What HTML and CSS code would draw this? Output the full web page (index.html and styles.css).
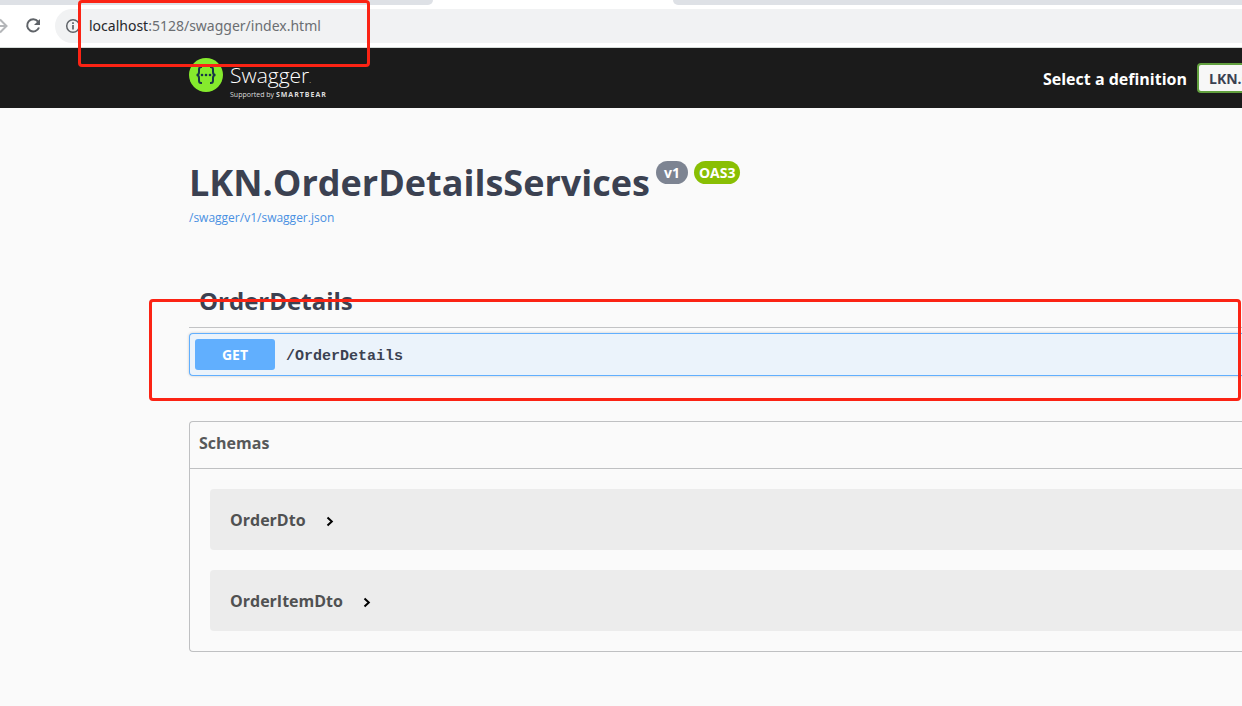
FILE: index.html
```
<!DOCTYPE html>
<html lang="en">
<head>
<meta charset="utf-8">
<title>Swagger UI</title>
<link rel="stylesheet" href="styles.css">
</head>
<body>
<div class="page">
  <div class="browser">
    <div class="tabs"><span class="tab tab-left"></span><span class="tab tab-active"></span><span class="tab tab-right"></span></div>
    <div class="toolbar">
      <button class="icon-btn forward" aria-label="Forward"><svg width="10" height="16" viewBox="0 0 10 16" fill="none" stroke="#b4b6b9" stroke-width="2"><path d="M-5 8H6M0 1.500L6.500 8L0 14.500"/></svg></button>
      <button class="icon-btn reload" aria-label="Reload"><svg width="16" height="16" viewBox="0 0 16 16"><path d="M13 3.500A6.100 6.100 0 1 0 14 9.500" fill="none" stroke="#5f6368" stroke-width="2"/><path d="M15 1V7H9Z" fill="#5f6368"/></svg></button>
      <div class="omnibox">
        <svg width="16" height="16" viewBox="0 0 16 16" fill="none" stroke="#5f6368" stroke-width="1.500"><circle cx="8" cy="8" r="6.300"/><path d="M8 7V11.500M8 4.300V6" stroke-width="1.700"/></svg>
        <a class="url" href="#"><span class="host">localhost</span>:5128/swagger/index.html</a>
      </div>
    </div>
  </div>

  <header class="topbar">
    <a class="brand" href="#" aria-label="Swagger">
      <svg width="34" height="34" viewBox="0 0 34 34"><circle cx="17" cy="17" r="17" fill="#85ea2d"/><g fill="none" stroke="#173647" stroke-width="2"><path d="M13 9H12Q10 9 10 11.500V14Q10 17 7.500 17Q10 17 10 20V22.500Q10 25 12 25H13M21 9H22Q24 9 24 11.500V14Q24 17 26.500 17Q24 17 24 20V22.500Q24 25 22 25H21"/></g><g fill="#173647"><circle cx="13" cy="17" r="1.300"/><circle cx="17" cy="17" r="1.300"/><circle cx="21" cy="17" r="1.300"/></g></svg>
      <span class="wordmark"><span class="name">Swagger<small>.</small></span><span class="support">Supported by <b>SMARTBEAR</b></span></span>
    </a>
    <div class="definition">
      <label for="def">Select a definition</label>
      <select id="def"><option>LKN.OrderDetailsServices v1</option></select>
    </div>
  </header>

  <main class="content">
    <div class="title-row">
      <h1>LKN.OrderDetailsServices</h1>
      <span class="badge">v1</span><span class="badge oas">OAS3</span>
    </div>
    <a class="spec" href="#">/swagger/v1/swagger.json</a>

    <h2>OrderDetails</h2>
    <button class="operation"><span class="method">GET</span><span class="path">/OrderDetails</span></button>

    <section class="schemas">
      <h3>Schemas</h3>
      <div class="models">
        <button class="model">OrderDto<svg width="8" height="14" viewBox="0 0 8 14" fill="none" stroke="#000" stroke-width="2"><path d="M1.500 4.500L5.800 8.500L1.500 12.500"/></svg></button>
        <button class="model">OrderItemDto<svg width="8" height="14" viewBox="0 0 8 14" fill="none" stroke="#000" stroke-width="2"><path d="M1.500 4.500L5.800 8.500L1.500 12.500"/></svg></button>
      </div>
    </section>
  </main>
  <div class="mark mark-url"></div>
  <div class="mark mark-operation"></div>
</div>
</body>
</html>
```
FILE: styles.css
```
* { box-sizing: border-box; }
body { margin: 0; background: #fafafa; color: #3b4151; font-family: "Open Sans", "Noto Sans", sans-serif; }
button { border: 0; margin: 0; padding: 0; background: none; font: inherit; color: inherit; text-align: left; }
a { text-decoration: none; }
svg { display: block; flex: none; }
h1, h2, h3 { margin: 0; }
.page { position: relative; min-height: 100vh; overflow: hidden; }

.browser { background: #fff; border-bottom: 1px solid #d5dbd8; }
.tabs { display: flex; height: 5px; }
.tab-left { width: 433px; background: #dee1e6; border-bottom-right-radius: 6px; }
.tab-active { width: 240px; }
.tab-right { flex: 1; background: #dee1e6; border-bottom-left-radius: 6px; }
.toolbar { display: flex; align-items: center; height: 42px; }
.forward { width: 25px; }
.reload { width: 30px; }
.omnibox { flex: 1; display: flex; align-items: center; gap: 8px; height: 34px; padding-left: 10px; border-radius: 17px 0 0 17px; background: #f1f2f3; }
.url { padding-bottom: 2px; font-family: "Noto Sans", sans-serif; font-size: 14px; color: #6b6e72; }
.host { color: #25272a; }

.topbar { display: flex; justify-content: space-between; align-items: center; height: 60px; padding-left: 189px; background: #1b1b1b; color: #fff; }
.brand { display: flex; gap: 7px; height: 40px; color: #fff; }
.wordmark { display: flex; flex-direction: column; padding-top: 6px; }
.name { font-size: 21px; line-height: 22px; font-weight: 300; }
.name small { font-size: 8px; }
.support { font-size: 7px; line-height: 8px; white-space: nowrap; color: #ddd; }
.support b { font-size: 7px; letter-spacing: 1px; }
.definition { display: flex; align-items: center; gap: 10px; }
.definition label { padding-top: 2px; font-size: 16px; font-weight: 700; }
.definition select { appearance: none; width: 240px; height: 30px; margin-right: -195px; padding: 0 10px; border: 2px solid #62a03f; border-radius: 4px; background: #f7f7f7; color: #3b4151; font: 700 14px "Open Sans", sans-serif; }

.content { padding: 50px 0 54px 189px; }
.title-row { display: flex; align-items: flex-start; gap: 6px; }
h1 { font-size: 36px; line-height: 50px; font-weight: 700; }
.badge { margin-top: 3px; padding: 0 8px; border-radius: 12px; background: #7d8492; color: #fff; font-size: 14px; line-height: 23px; font-weight: 700; }
.oas { padding: 0 5px; background: #89bf04; }
.spec { display: block; font-size: 12px; line-height: 20px; color: #4990e2; }
h2 { margin-top: 51px; padding: 6px 10px 10px; border-bottom: 1px solid #c2c3c5; font-size: 24px; line-height: 32px; }
.operation { display: flex; align-items: center; gap: 11px; width: 100%; height: 43px; margin-top: 5px; padding: 5px; border: 1px solid #61affe; border-right: 0; border-radius: 4px 0 0 4px; background: #ebf3fb; box-shadow: 0 0 3px #0003; }
.method { width: 80px; border-radius: 3px; background: #61affe; color: #fff; font-size: 14px; line-height: 31px; font-weight: 700; text-align: center; }
.path { padding-top: 4px; font: 700 15px "Liberation Mono", monospace; }
.schemas { margin-top: 45px; border: 1px solid #bfc0c2; border-right: 0; border-radius: 4px 0 0 4px; }
h3 { padding: 8px 9px 12px; border-bottom: 1px solid #bfc0c2; font-size: 16px; line-height: 26px; color: #575859; }
.models { display: grid; gap: 20px; padding: 20px 0 20px 20px; }
.model { display: flex; align-items: center; gap: 20px; height: 61px; padding-left: 20px; border-radius: 4px 0 0 4px; background: #ececec; color: #505152; font-size: 16px; font-weight: 700; }

.mark { position: absolute; border: 3px solid #fb2314; border-radius: 4px; pointer-events: none; }
.mark-url { left: 78px; top: 0; width: 292px; height: 67px; }
.mark-operation { left: 149px; top: 299px; right: 1px; height: 102px; }
```
